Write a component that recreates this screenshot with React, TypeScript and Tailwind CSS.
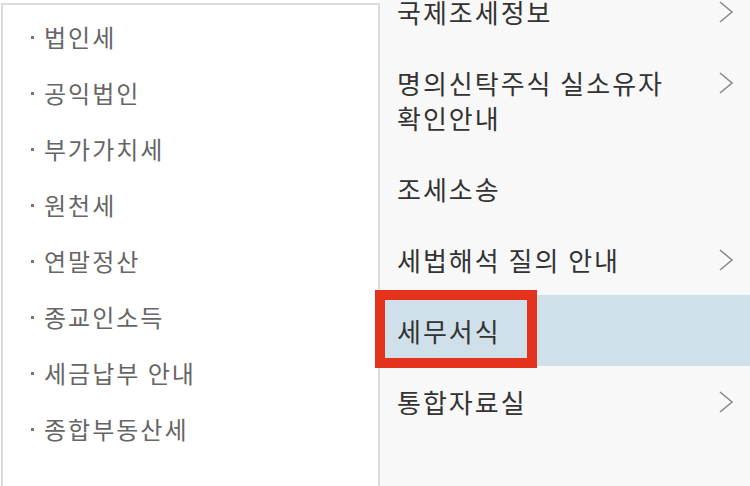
const LEFT = ['법인세', '공익법인', '부가가치세', '원천세', '연말정산', '종교인소득', '세금납부 안내', '종합부동산세']

type Item = { lines: string[]; arrow: boolean; active?: boolean }

const RIGHT: Item[] = [
  { lines: ['국제조세정보'], arrow: true },
  { lines: ['명의신탁주식 실소유자', '확인안내'], arrow: true },
  { lines: ['조세소송'], arrow: false },
  { lines: ['세법해석 질의 안내'], arrow: true },
  { lines: ['세무서식'], arrow: false, active: true },
  { lines: ['통합자료실'], arrow: true },
]

function Chevron() {
  return (
    <svg width="16" height="24" viewBox="0 0 16 24" className="shrink-0">
      <polyline points="2,2 14,12 2,22" fill="none" stroke="#8a8a8a" strokeWidth="1.6" />
    </svg>
  )
}

export default function App() {
  return (
    <div
      className="relative flex h-[486px] w-[750px] overflow-hidden bg-white"
      style={{ fontFamily: '"Noto Sans CJK KR", "Noto Sans", sans-serif' }}
    >
      {/* left submenu */}
      <div className="w-[380px] shrink-0 pl-[1px] pt-[3px]">
        <div className="h-full border-x-2 border-t-2 border-[#dcdcdc] bg-white pt-[4px] pl-[28px]">
          <ul className="flex flex-col">
            {LEFT.map((t) => (
              <li key={t} className="flex h-[56px] items-center text-[24px] tracking-[2px] text-[#666]">
                <span className="mr-[10px] h-[3px] w-[3px] bg-[#777]" />
                {t}
              </li>
            ))}
          </ul>
        </div>
      </div>

      {/* right menu */}
      <div className="flex-1 bg-[#f8f8f8]">
        <ul className="-mt-[24px] flex flex-col">
          {RIGHT.map((it) => (
            <li
              key={it.lines[0]}
              className={`flex items-start justify-between py-[18px] pl-[17px] pr-[16px] text-[26px] leading-[35px] tracking-[2px] text-[#333] ${
                it.active ? 'bg-[#d0e0ea]' : ''
              }`}
            >
              <span>
                {it.lines.map((l) => (
                  <span key={l} className="block">
                    {l}
                  </span>
                ))}
              </span>
              {it.arrow && (
                <span className="flex h-[35px] items-center">
                  <Chevron />
                </span>
              )}
            </li>
          ))}
        </ul>
      </div>

      {/* annotation box */}
      <div className="absolute left-[375px] top-[290px] h-[78px] w-[162px] border-[10px] border-[#e5321c]" />
    </div>
  )
}
